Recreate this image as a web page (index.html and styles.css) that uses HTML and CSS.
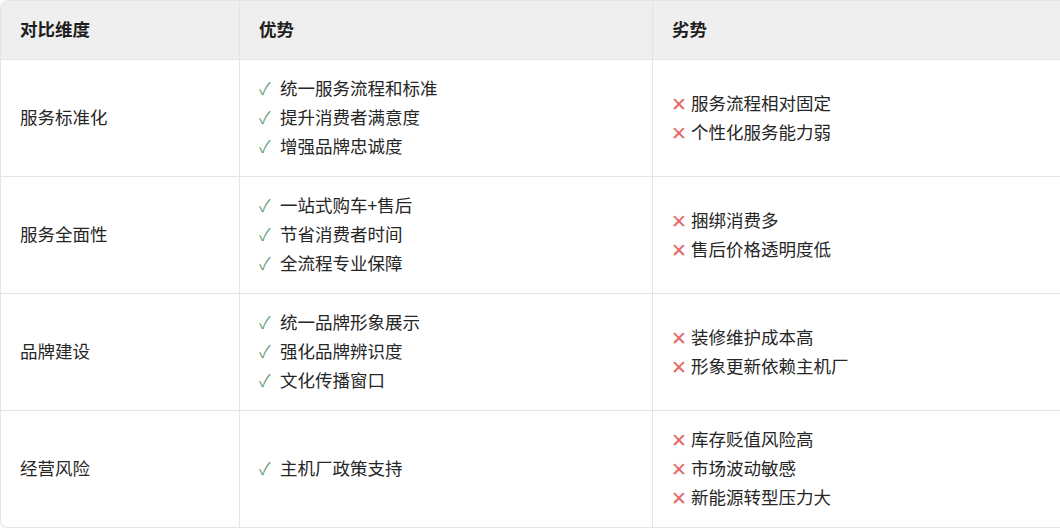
FILE: index.html
```html
<!DOCTYPE html>
<html lang="zh">
<head>
<meta charset="utf-8">
<link rel="stylesheet" href="styles.css">
</head>
<body>
<div class="table">
  <div class="row head">
    <div class="cell c1">对比维度</div>
    <div class="cell c2">优势</div>
    <div class="cell c3">劣势</div>
  </div>
  <div class="row">
    <div class="cell c1">服务标准化</div>
    <div class="cell c2">
      <div class="item"><span class="ok">✓</span>统一服务流程和标准</div>
      <div class="item"><span class="ok">✓</span>提升消费者满意度</div>
      <div class="item"><span class="ok">✓</span>增强品牌忠诚度</div>
    </div>
    <div class="cell c3">
      <div class="item"><span class="no">✕</span>服务流程相对固定</div>
      <div class="item"><span class="no">✕</span>个性化服务能力弱</div>
    </div>
  </div>
  <div class="row">
    <div class="cell c1">服务全面性</div>
    <div class="cell c2">
      <div class="item"><span class="ok">✓</span>一站式购车+售后</div>
      <div class="item"><span class="ok">✓</span>节省消费者时间</div>
      <div class="item"><span class="ok">✓</span>全流程专业保障</div>
    </div>
    <div class="cell c3">
      <div class="item"><span class="no">✕</span>捆绑消费多</div>
      <div class="item"><span class="no">✕</span>售后价格透明度低</div>
    </div>
  </div>
  <div class="row">
    <div class="cell c1">品牌建设</div>
    <div class="cell c2">
      <div class="item"><span class="ok">✓</span>统一品牌形象展示</div>
      <div class="item"><span class="ok">✓</span>强化品牌辨识度</div>
      <div class="item"><span class="ok">✓</span>文化传播窗口</div>
    </div>
    <div class="cell c3">
      <div class="item"><span class="no">✕</span>装修维护成本高</div>
      <div class="item"><span class="no">✕</span>形象更新依赖主机厂</div>
    </div>
  </div>
  <div class="row last">
    <div class="cell c1">经营风险</div>
    <div class="cell c2">
      <div class="item"><span class="ok">✓</span>主机厂政策支持</div>
    </div>
    <div class="cell c3">
      <div class="item"><span class="no">✕</span>库存贬值风险高</div>
      <div class="item"><span class="no">✕</span>市场波动敏感</div>
      <div class="item"><span class="no">✕</span>新能源转型压力大</div>
    </div>
  </div>
</div>
</body>
</html>
```

FILE: styles.css
```css
html, body {
  margin: 0;
  padding: 0;
  background: #ffffff;
}
body {
  font-family: "Noto Sans CJK SC", "Noto Sans", sans-serif;
  font-size: 17.5px;
  color: #262626;
  overflow: hidden;
}
.table {
  width: 1072px;
  border: 1px solid #e4e4e4;
  border-radius: 8px;
  overflow: hidden;
  box-shadow: 0 1px 3px rgba(0,0,0,0.06);
}
.row {
  display: grid;
  grid-template-columns: 238px 413px 1fr;
  border-bottom: 1px solid #e4e4e4;
  height: 116px;
}
.row.last {
  border-bottom: none;
}
.row.head {
  height: 58px;
  background: #efefef;
  font-weight: 600;
}
.cell {
  display: flex;
  flex-direction: column;
  justify-content: center;
  padding-left: 19px;
  padding-bottom: 3px;
  line-height: 29px;
}
.c2, .c3 {
  border-left: 1px solid #e4e4e4;
}
.head .cell {
  color: #1e1e1e;
}
.item {
  white-space: nowrap;
  display: flex;
  align-items: center;
  height: 29px;
}
.ok, .no {
  display: inline-block;
  line-height: 1;
  flex: none;
}
.ok {
  color: #6a9f78;
  font-size: 17px;
  width: 21px;
}
.no {
  color: #e46a66;
  font-size: 19px;
  width: 20px;
  margin-left: -1px;
}
```
